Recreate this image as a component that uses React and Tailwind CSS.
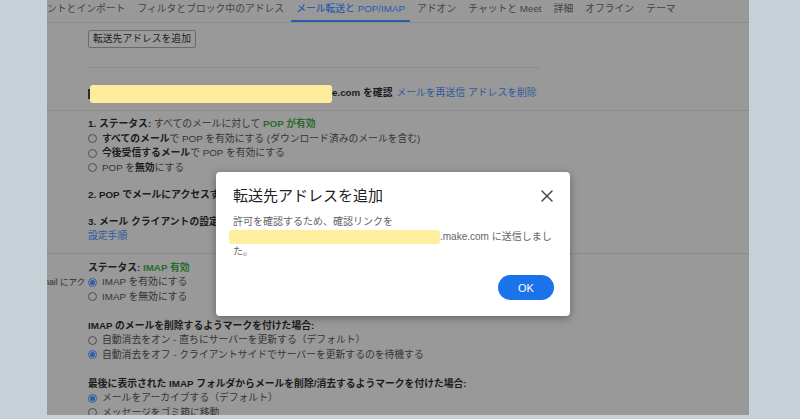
import { X } from "lucide-react";

const tabs = [
  "ントとインポート",
  "フィルタとブロック中のアドレス",
  "メール転送と POP/IMAP",
  "アドオン",
  "チャットと Meet",
  "詳細",
  "オフライン",
  "テーマ",
];

const Radio = ({ checked }) =>
  checked ? (
    <span className="flex h-[9px] w-[9px] shrink-0 items-center justify-center rounded-full border border-[#2e5ca8]">
      <span className="h-[5px] w-[5px] rounded-full bg-[#2e5ca8]" />
    </span>
  ) : (
    <span className="h-[9px] w-[9px] shrink-0 rounded-full border border-[#4e4e4e]" />
  );

const Option = ({ checked, children }) => (
  <div className="flex h-[14.5px] items-center gap-[5px] whitespace-nowrap">
    <Radio checked={checked} />
    <span className="text-[#353535]">{children}</span>
  </div>
);

const Bold = ({ children }) => (
  <span className="font-bold text-[#1c1c1c]">{children}</span>
);

export default function App() {
  return (
    <div className="relative h-[419px] w-[800px] overflow-hidden bg-[#c5d1d7] font-['Liberation_Sans','Noto_Sans_CJK_JP',sans-serif] text-[9.8px]">
      <div className="flex h-[415px]">
        <div className="w-[47px] shrink-0" />

        <main className="w-[702px] shrink-0 overflow-hidden bg-[#989998]">
          {/* tabs */}
          <div className="flex h-[23px] gap-[12px] border-b border-[#8c8c8c] whitespace-nowrap">
            {tabs.map((t, i) =>
              i === 2 ? (
                <div
                  key={t}
                  className="-mx-[5px] h-[22px] border-b-2 border-[#2b5bab] px-[5px] pt-[3px] leading-[12px] font-medium text-[#2b5bab]"
                >
                  {t}
                </div>
              ) : (
                <div key={t} className="h-[22px] pt-[3px] leading-[12px] text-[#434343]">
                  {t}
                </div>
              )
            )}
          </div>

          <div className="pl-[41px]">
            <button className="mt-[7px] h-[18px] rounded-[2px] border border-[#6a6a6a] bg-[#9b9b9b] px-[4px] leading-[16px] text-[#1f1f1f]">
              転送先アドレスを追加
            </button>

            <div className="mt-[19px] h-px w-[452px] bg-[#8c8c8c]" />

            <div className="mt-[16px] flex h-[19px] items-center whitespace-nowrap">
              <span className="h-[10px] w-[2px] bg-[#2a2a2a]" />
              <span className="h-[18px] w-[242px] rounded-[3px] bg-[#fcec9c]" />
              <Bold>e.com を確認</Bold>
              <span className="ml-[4px] text-[#2f5a9e]">メールを再送信</span>
              <span className="ml-[3px] text-[#2f5a9e]">アドレスを削除</span>
            </div>

            <div className="-ml-[41px] mt-[7px] h-px w-[702px] bg-[#8c8c8c]" />

            {/* POP */}
            <div className="mt-[6px] leading-[14.5px]">
              <div className="h-[14.5px] whitespace-nowrap">
                <Bold>1. ステータス: </Bold>
                <span className="text-[#353535]">すべてのメールに対して </span>
                <span className="font-bold text-[#2a6b2d]">POP が有効</span>
              </div>
              <Option>
                <Bold>すべてのメール</Bold>で POP を有効にする (ダウンロード済みのメールを含む)
              </Option>
              <Option>
                <Bold>今後受信するメール</Bold>で POP を有効にする
              </Option>
              <Option>
                POP を<Bold>無効</Bold>にする
              </Option>
            </div>

            <div className="mt-[12.5px] h-[14.5px] leading-[14.5px] whitespace-nowrap">
              <Bold>2. POP でメールにアクセスする場合</Bold>
            </div>

            <div className="mt-[12.5px] leading-[14.5px] whitespace-nowrap">
              <Bold>3. メール クライアントの設定（Outlook、Eudora、Netscape Mail など）</Bold>
              <div className="text-[#2f5a9e]">設定手順</div>
            </div>

            <div className="-ml-[41px] mt-[9px] h-px w-[702px] bg-[#8c8c8c]" />

            {/* IMAP */}
            <div className="mt-[7px] leading-[14.5px]">
              <div className="h-[14.5px] whitespace-nowrap">
                <Bold>ステータス: </Bold>
                <span className="font-bold text-[#2a6b2d]">IMAP 有効</span>
              </div>
              <div className="-ml-[41px] flex">
                <div className="mr-[3px] flex w-[38px] shrink-0 justify-end overflow-hidden whitespace-nowrap text-[8.5px] text-[#2f2f2f]">
                  Gmail にアク
                </div>
                <Option checked>IMAP を有効にする</Option>
              </div>
              <Option>IMAP を無効にする</Option>

              <div className="mt-[14.5px] h-[14.5px] whitespace-nowrap">
                <Bold>IMAP のメールを削除するようマークを付けた場合:</Bold>
              </div>
              <Option>自動消去をオン - 直ちにサーバーを更新する（デフォルト）</Option>
              <Option checked>
                自動消去をオフ - クライアントサイドでサーバーを更新するのを待機する
              </Option>

              <div className="mt-[14.5px] h-[14.5px] whitespace-nowrap">
                <Bold>
                  最後に表示された IMAP フォルダからメールを削除/消去するようマークを付けた場合:
                </Bold>
              </div>
              <Option checked>メールをアーカイブする（デフォルト）</Option>
              <Option>メッセージをゴミ箱に移動</Option>
            </div>
          </div>
        </main>

        <div className="flex-1" />
      </div>

      {/* dialog */}
      <div className="absolute left-[216px] top-[172px] w-[354px] rounded-[4px] bg-white px-[17px] pb-[16px] pt-[14px] shadow-[0_2px_8px_rgba(0,0,0,0.35)]">
        <div className="flex items-center justify-between">
          <h2 className="text-[15px] leading-[20px] text-[#202124]">転送先アドレスを追加</h2>
          <X size={20} strokeWidth={1.7} className="-mr-[4px] text-[#444746]" />
        </div>
        <p className="mt-[8px] w-[320px] text-[10px] leading-[15px] text-[#5f6368]">
          許可を確認するため、確認リンクを
          <br />
          <span className="-ml-[4px] inline-block h-[14px] w-[211px] rounded-[3px] bg-[#fdeea0] align-middle" />
          .make.com に送信しました。
        </p>
        <div className="mt-[16px] flex justify-end">
          <button className="-mr-[1px] h-[25px] w-[56px] rounded-full bg-[#1a73e8] text-[11px] font-medium text-white">
            OK
          </button>
        </div>
      </div>
    </div>
  );
}
